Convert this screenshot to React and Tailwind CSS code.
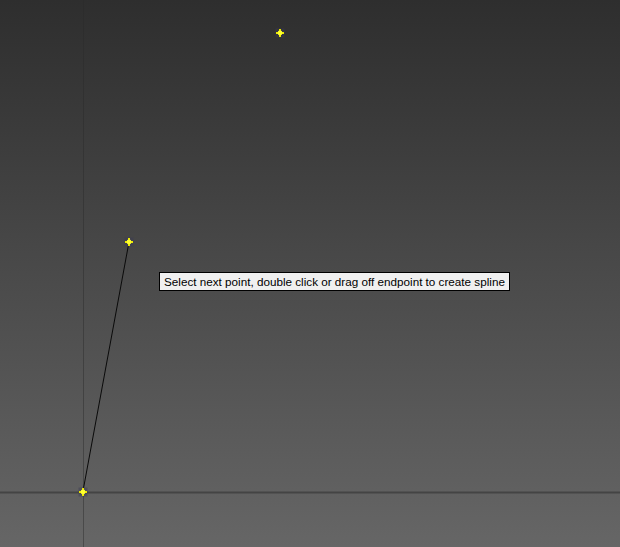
import React from "react";

function Marker({ x, y }) {
  return (
    <g transform={`translate(${x} ${y})`}>
      <rect x="-4.5" y="-4.5" width="9" height="9" fill="#3a3a55" opacity="0.45" />
      <path d="M-4 0H4M0 -4V4" stroke="#e8e800" strokeWidth="2" />
      <circle r="2.4" fill="#ffff30" />
    </g>
  );
}

export default function App() {
  return (
    <div className="relative w-[620px] h-[547px] overflow-hidden bg-gradient-to-b from-[#2e2e2e] via-[#4a4a4a] to-[#666666]">
      <svg className="absolute inset-0" width="620" height="547" viewBox="0 0 620 547">
        <line x1="83.5" y1="0" x2="83.5" y2="547" stroke="#2a2a2a" strokeOpacity="0.45" strokeWidth="1" />
        <line x1="0" y1="492.5" x2="620" y2="492.5" stroke="#444444" strokeWidth="2" />
        <line x1="83" y1="491" x2="129" y2="242" stroke="#0a0a0a" strokeWidth="1" />
        <Marker x={280} y={33} />
        <Marker x={129} y={242} />
        <Marker x={83} y={492} />
      </svg>
      <div className="absolute left-[159px] top-[272px] h-[19px] border border-black bg-[#f0f0f0] px-[4px] text-[11.7px] leading-[17px] text-black whitespace-nowrap font-['Liberation_Sans',Arial,sans-serif]">
        Select next point, double click or drag off endpoint to create spline
      </div>
    </div>
  );
}
